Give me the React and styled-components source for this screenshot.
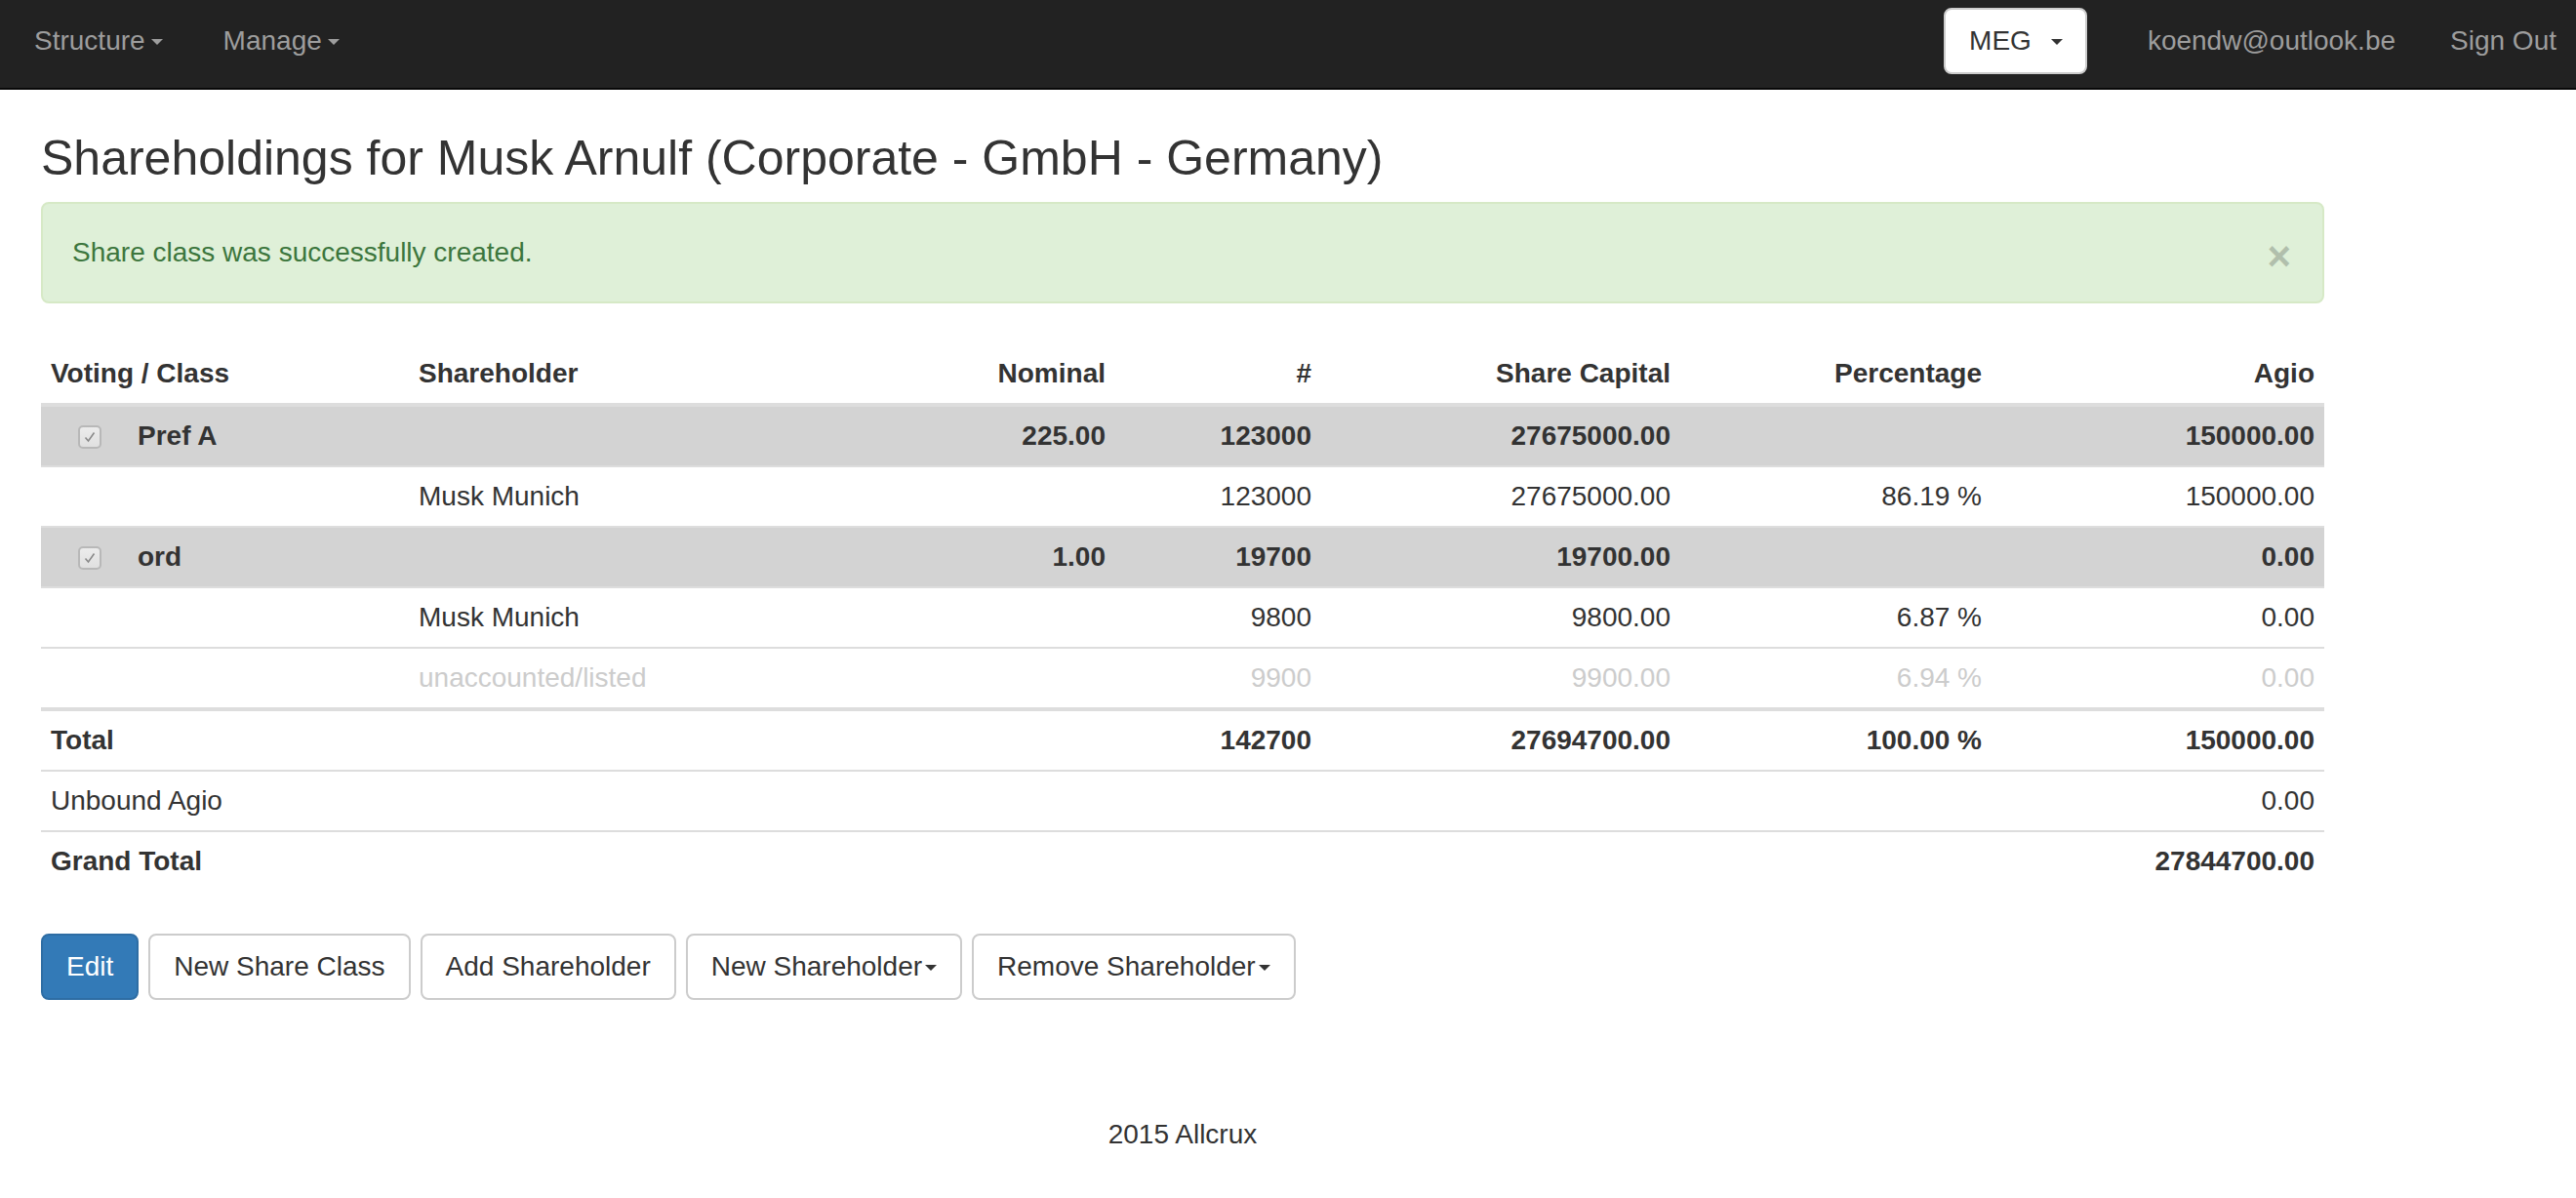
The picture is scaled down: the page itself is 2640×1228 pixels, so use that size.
import { createGlobalStyle, styled } from "styled-components";

const GlobalStyle = createGlobalStyle`
  html, body {
    margin: 0;
    padding: 0;
    background: #fff;
  }
  body {
    font-family: "Liberation Sans", Arial, sans-serif;
    font-size: 28px;
    line-height: 40px;
    color: #333;
  }
`;

const Navbar = styled.nav`
  display: flex;
  justify-content: space-between;
  align-items: flex-start;
  height: 90px;
  background-color: #222;
  border-bottom: 2px solid #080808;
`;

const NavList = styled.div`
  display: flex;
  align-items: flex-start;
  padding-left: ${(p) => p.$padLeft || 0}px;
  margin-right: ${(p) => p.$marginRight || 0}px;
`;

const NavLink = styled.a`
  display: flex;
  align-items: center;
  padding: 22px ${(p) => p.$padX || 28}px 28px;
  color: #9d9d9d;
  text-decoration: none;
  line-height: 40px;
  white-space: nowrap;
`;

const Caret = styled.span`
  display: inline-block;
  width: 0;
  height: 0;
  margin-left: ${(p) => p.$gap || 4}px;
  margin-top: 2px;
  border-top: 6px solid ${(p) => p.$color || "#333"};
  border-left: 6px solid transparent;
  border-right: 6px solid transparent;
`;

const SwitchButton = styled.button`
  display: flex;
  align-items: center;
  margin-top: 8px;
  margin-right: 34px;
  height: 68px;
  padding: 0 23px 0 24px;
  background: #fff;
  border: 2px solid #ccc;
  border-radius: 8px;
  font-family: inherit;
  font-size: 28px;
  color: #333;
`;

const Main = styled.main`
  width: 2340px;
  padding: 0 42px;
`;

const Title = styled.h3`
  margin: 44px 0 18px;
  font-size: 50px;
  line-height: 53px;
  font-weight: 500;
  color: #333;
`;

const Alert = styled.div`
  display: flex;
  justify-content: space-between;
  align-items: center;
  padding: 30px 32px 30px 30px;
  margin-bottom: 42px;
  background-color: #dff0d8;
  border: 2px solid #d6e9c6;
  border-radius: 8px;
  color: #3c763d;
  line-height: 40px;
`;

const Close = styled.span`
  position: relative;
  top: 4px;
  height: 40px;
  font-size: 42px;
  font-weight: 700;
  line-height: 40px;
  color: #000;
  opacity: 0.2;
`;

const Table = styled.table`
  width: 100%;
  border-collapse: collapse;
  table-layout: fixed;
  margin-bottom: 44px;
`;

const Col = styled.col`
  width: ${(p) => p.$w}px;
`;

const Th = styled.th`
  padding: 10px;
  text-align: ${(p) => (p.$right ? "right" : "left")};
  vertical-align: bottom;
  border-bottom: 4px solid #ddd;
  font-weight: 700;
`;

const Row = styled.tr`
  background-color: ${(p) => (p.$shaded ? "#d3d3d3" : "transparent")};
  font-weight: ${(p) => (p.$bold ? 700 : 400)};
  color: ${(p) => (p.$muted ? "#ccc" : "#333")};
`;

const Td = styled.td`
  padding: 10px;
  border-top: ${(p) => (p.$thick ? 4 : 2)}px solid #ddd;
  text-align: ${(p) => (p.$right ? "right" : "left")};
  white-space: nowrap;
`;

const ClassLabel = styled.div`
  display: flex;
  align-items: center;
`;

const CheckBox = styled.span`
  display: inline-flex;
  align-items: center;
  justify-content: center;
  box-sizing: border-box;
  width: 24px;
  height: 24px;
  margin: 2px 37px 0 28px;
  border: 2px solid #b8b8b8;
  border-radius: 5px;
  background: linear-gradient(#ececec, #e0e0e0);
`;

const ButtonRow = styled.div`
  display: flex;
  gap: 10px;
`;

const Button = styled.button`
  display: inline-flex;
  align-items: center;
  height: 68px;
  padding: 0 24px;
  border: 2px solid ${(p) => (p.$primary ? "#2e6da4" : "#ccc")};
  border-radius: 8px;
  background-color: ${(p) => (p.$primary ? "#337ab7" : "#fff")};
  color: ${(p) => (p.$primary ? "#fff" : "#333")};
  font-family: inherit;
  font-size: 28px;
  line-height: 40px;
  white-space: nowrap;
`;

const Footer = styled.footer`
  margin-top: 118px;
  text-align: center;
`;

const Check = () => (
  <svg width="16" height="16" viewBox="0 0 16 16">
    <path d="M3.5 8.5 L6.5 12 L12.5 3.5" fill="none" stroke="#8a8a8a" strokeWidth="1.6" />
  </svg>
);

const classes = [
  {
    name: "Pref A",
    nominal: "225.00",
    count: "123000",
    capital: "27675000.00",
    agio: "150000.00",
    holders: [
      { name: "Musk Munich", count: "123000", capital: "27675000.00", pct: "86.19 %", agio: "150000.00" },
    ],
  },
  {
    name: "ord",
    nominal: "1.00",
    count: "19700",
    capital: "19700.00",
    agio: "0.00",
    holders: [
      { name: "Musk Munich", count: "9800", capital: "9800.00", pct: "6.87 %", agio: "0.00" },
      { name: "unaccounted/listed", count: "9900", capital: "9900.00", pct: "6.94 %", agio: "0.00", muted: true },
    ],
  },
];

const App = () => {
  return (
    <>
      <GlobalStyle />
      <Navbar>
        <NavList $padLeft={4}>
          <NavLink $padX={31}>
            Structure<Caret $color="#9d9d9d" $gap={6} />
          </NavLink>
          <NavLink $padX={31}>
            Manage<Caret $color="#9d9d9d" $gap={6} />
          </NavLink>
        </NavList>
        <NavList $marginRight={-8}>
          <SwitchButton>
            MEG<Caret $gap={20} />
          </SwitchButton>
          <NavLink>koendw@outlook.be</NavLink>
          <NavLink>Sign Out</NavLink>
        </NavList>
      </Navbar>

      <Main>
        <Title>Shareholdings for Musk Arnulf (Corporate - GmbH - Germany)</Title>

        <Alert>
          <span>Share class was successfully created.</span>
          <Close>×</Close>
        </Alert>

        <Table>
          <colgroup>
            <Col $w={377} />
            <Col $w={381} />
            <Col $w={343} />
            <Col $w={211} />
            <Col $w={368} />
            <Col $w={319} />
            <Col $w={341} />
          </colgroup>
          <thead>
            <tr>
              <Th>Voting / Class</Th>
              <Th>Shareholder</Th>
              <Th $right>Nominal</Th>
              <Th $right>#</Th>
              <Th $right>Share Capital</Th>
              <Th $right>Percentage</Th>
              <Th $right>Agio</Th>
            </tr>
          </thead>
          <tbody>
            {classes.map((c) => (
              <>
                <Row key={c.name} $shaded $bold>
                  <Td>
                    <ClassLabel>
                      <CheckBox>
                        <Check />
                      </CheckBox>
                      {c.name}
                    </ClassLabel>
                  </Td>
                  <Td />
                  <Td $right>{c.nominal}</Td>
                  <Td $right>{c.count}</Td>
                  <Td $right>{c.capital}</Td>
                  <Td $right />
                  <Td $right>{c.agio}</Td>
                </Row>
                {c.holders.map((h) => (
                  <Row key={c.name + h.name} $muted={h.muted}>
                    <Td />
                    <Td>{h.name}</Td>
                    <Td />
                    <Td $right>{h.count}</Td>
                    <Td $right>{h.capital}</Td>
                    <Td $right>{h.pct}</Td>
                    <Td $right>{h.agio}</Td>
                  </Row>
                ))}
              </>
            ))}
          </tbody>
          <tbody>
            <Row $bold>
              <Td $thick>Total</Td>
              <Td $thick />
              <Td $thick />
              <Td $thick $right>142700</Td>
              <Td $thick $right>27694700.00</Td>
              <Td $thick $right>100.00 %</Td>
              <Td $thick $right>150000.00</Td>
            </Row>
            <Row>
              <Td>Unbound Agio</Td>
              <Td />
              <Td />
              <Td />
              <Td />
              <Td />
              <Td $right>0.00</Td>
            </Row>
            <Row $bold>
              <Td>Grand Total</Td>
              <Td />
              <Td />
              <Td />
              <Td />
              <Td />
              <Td $right>27844700.00</Td>
            </Row>
          </tbody>
        </Table>

        <ButtonRow>
          <Button $primary>Edit</Button>
          <Button>New Share Class</Button>
          <Button>Add Shareholder</Button>
          <Button>
            New Shareholder<Caret $gap={3} />
          </Button>
          <Button>
            Remove Shareholder<Caret $gap={3} />
          </Button>
        </ButtonRow>

        <Footer>2015 Allcrux</Footer>
      </Main>
    </>
  );
};

export default App;
